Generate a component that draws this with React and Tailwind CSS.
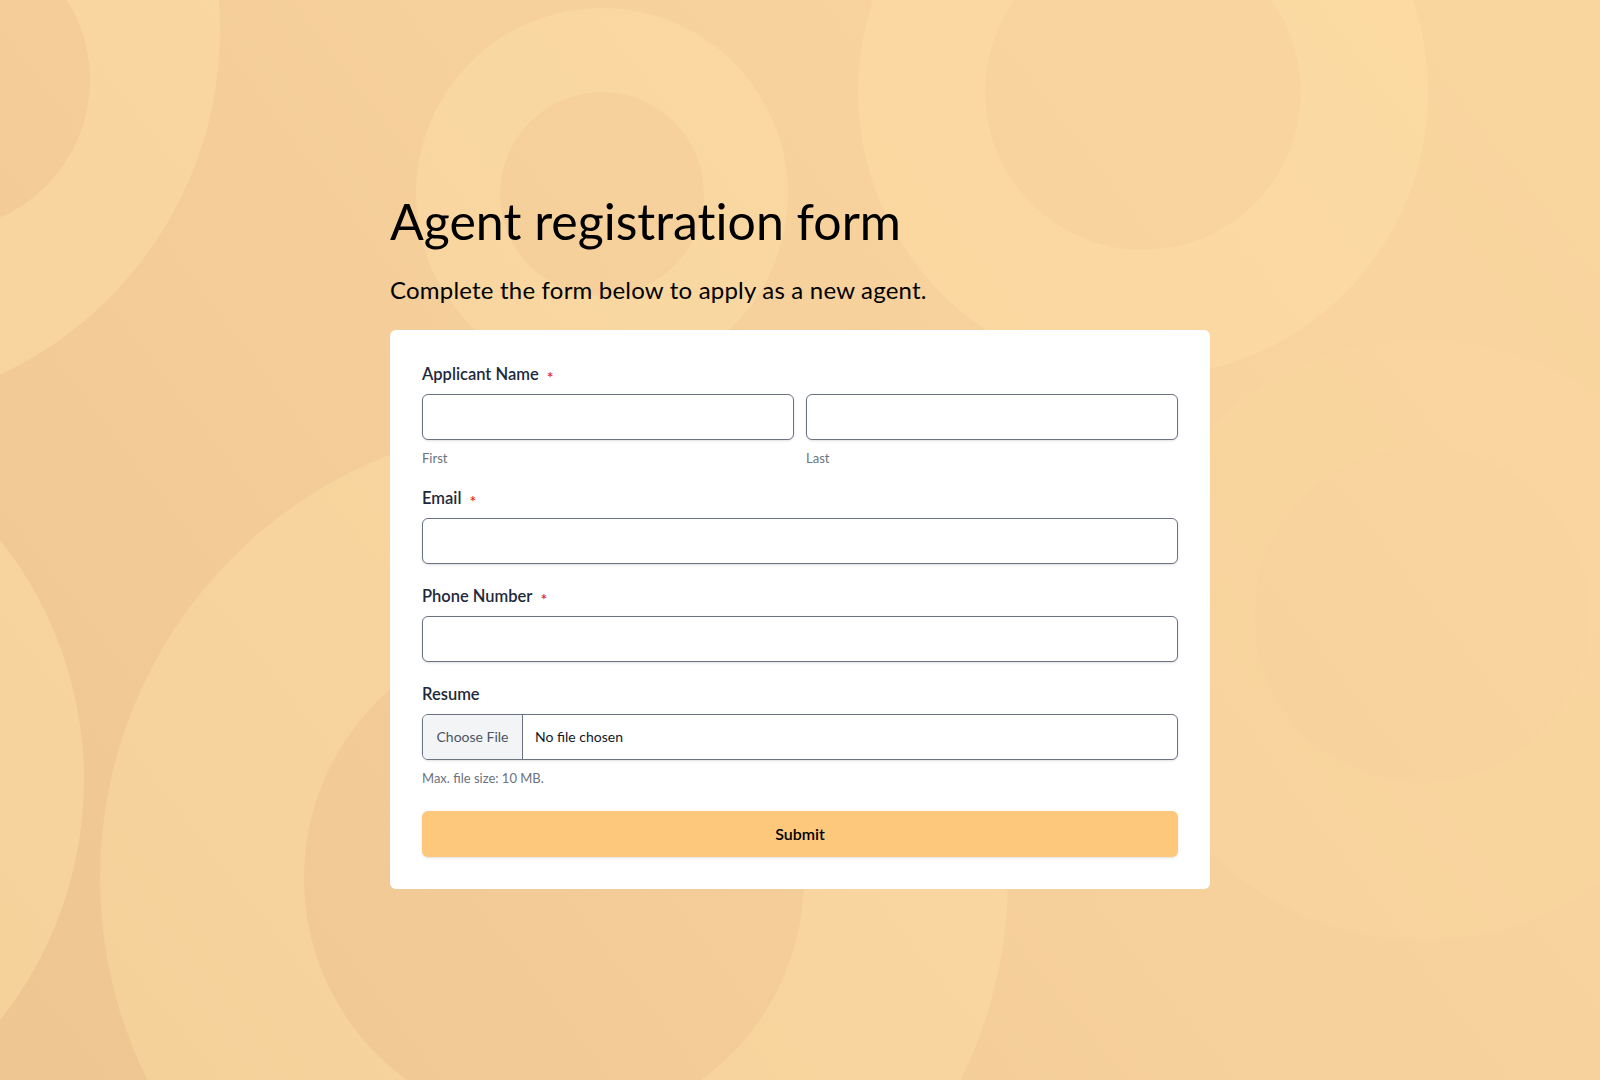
import React from "react";

function Backdrop() {
  // decorative soft circles behind the form
  const rings = [
    { cx: -160, cy: 30, r: 380, ir: 150, icx: -60, icy: 80, o: 0.45 },
    { cx: 602, cy: 194, r: 186, ir: 102, o: 0.4 },
    { cx: 1143, cy: 92, r: 285, ir: 158, o: 0.4 },
    { cx: 1422, cy: 640, r: 300, ir: 168, icy: 615, o: 0.18 },
    { cx: 554, cy: 878, r: 454, ir: 250, o: 0.4 },
  ];
  return (
    <svg
      className="absolute inset-0 w-full h-full"
      viewBox="0 0 1600 1080"
      preserveAspectRatio="xMidYMid slice"
    >
      <defs>
        <linearGradient id="bg" gradientUnits="userSpaceOnUse" x1="1500" y1="0" x2="100" y2="1080">
          <stop offset="0" stopColor="#fad69f" />
          <stop offset="0.5" stopColor="#f6d09b" />
          <stop offset="1" stopColor="#eec691" />
        </linearGradient>
      </defs>
      <rect width="1600" height="1080" fill="url(#bg)" />
      <circle cx="-301" cy="780" r="385" fill="#ffe0a8" opacity="0.45" />
      {rings.map((c, i) => (
        <g key={i}>
          <circle cx={c.cx} cy={c.cy} r={c.r} fill="#ffe0a8" opacity={c.o} />
          <circle cx={c.icx ?? c.cx} cy={c.icy ?? c.cy} r={c.ir} fill="url(#bg)" />
        </g>
      ))}
    </svg>
  );
}

function Label({ children, required }) {
  return (
    <label className="flex items-center text-[16.5px] font-semibold text-[#1e293b] leading-6">
      {children}
      {required && (
        <span className="ml-2 translate-y-[3px] text-base leading-none text-[#dc2626]">*</span>
      )}
    </label>
  );
}

function TextInput() {
  return (
    <input
      type="text"
      className="block w-full h-[46px] rounded-md border border-[#6b7280] bg-white px-3 text-sm shadow-sm outline-none"
    />
  );
}

export default function App() {
  return (
    <div
      className="relative min-h-screen overflow-hidden"
      style={{ fontFamily: "Lato, 'Noto Sans', sans-serif" }}
    >
      <Backdrop />
      <div className="relative mx-auto w-[820px] pt-[192px] pb-20">
        <h1 className="text-[50px] leading-[58px] text-black [font-variant-ligatures:none]">
          Agent registration form
        </h1>
        <p className="mt-[24px] text-2xl leading-8 tracking-[0.2px] text-black">
          Complete the form below to apply as a new agent.
        </p>

        <form className="mt-[24px] flex flex-col rounded-md bg-white p-8">
          <div>
            <Label required>Applicant Name</Label>
            <div className="mt-2 grid grid-cols-2 gap-3">
              <div>
                <TextInput />
                <p className="mt-2 text-[13px] leading-5 text-[#6b7280]">First</p>
              </div>
              <div>
                <TextInput />
                <p className="mt-2 text-[13px] leading-5 text-[#6b7280]">Last</p>
              </div>
            </div>
          </div>

          <div className="mt-[18px]">
            <Label required>Email</Label>
            <div className="mt-2">
              <TextInput />
            </div>
          </div>

          <div className="mt-5">
            <Label required>Phone Number</Label>
            <div className="mt-2">
              <TextInput />
            </div>
          </div>

          <div className="mt-5">
            <Label>Resume</Label>
            <label className="mt-2 flex h-[46px] w-full cursor-pointer overflow-hidden rounded-md border border-[#6b7280] bg-white shadow-sm">
              <span className="flex w-[100px] items-center justify-center border-r border-[#6b7280] bg-[#f3f4f6] text-sm text-[#4b5563]">
                Choose File
              </span>
              <span className="flex items-center pl-3 text-sm text-[#111827]">No file chosen</span>
              <input type="file" className="hidden" />
            </label>
            <p className="mt-2 text-[13px] leading-5 text-[#6b7280]">Max. file size: 10 MB.</p>
          </div>

          <button
            type="button"
            className="mt-[23px] h-[46px] w-full rounded-md bg-[#fec87c] text-base font-semibold text-black shadow-sm"
          >
            Submit
          </button>
        </form>
      </div>
    </div>
  );
}
